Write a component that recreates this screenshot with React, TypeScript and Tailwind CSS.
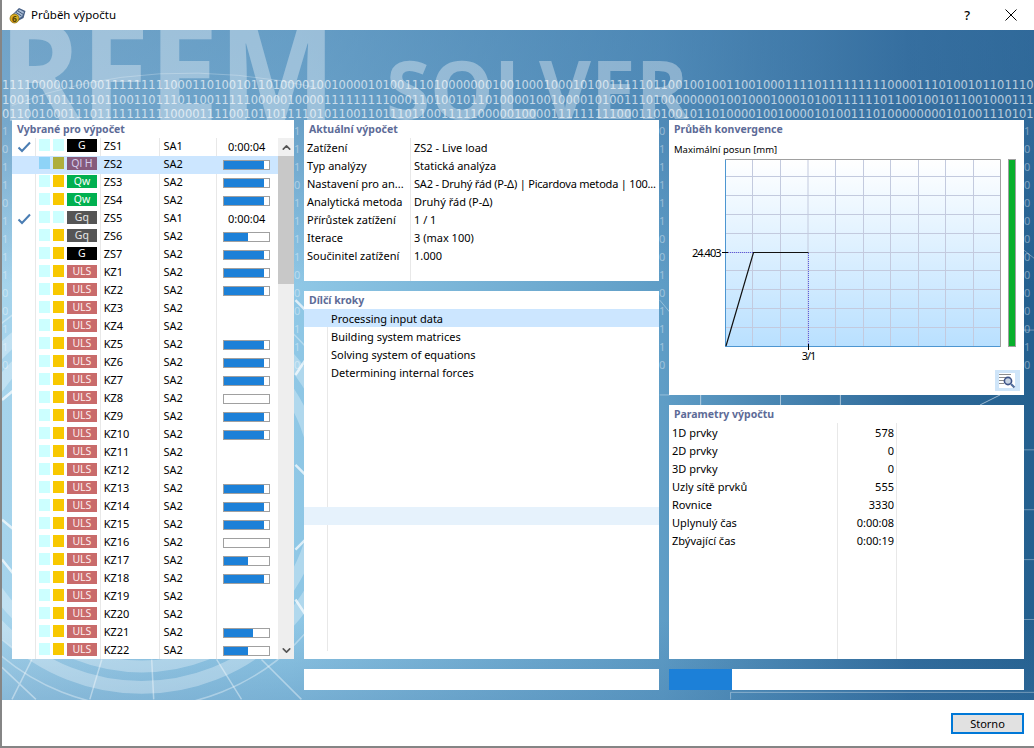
import { ChevronDown, ChevronUp } from "lucide-react";

const BIN = [
  "11110000010000111111111000110100101101000010010000101001110100000001001000100010100111110110010010011001000111101111111110000111010010110111010",
  "10010110111010110011011101100111110000010000111111111000110100101101000010010000101001110100000000100100010001010011111101100100101100100011101",
  "01100100011101111111111000011110010110111101011001101110110011111000001000011111111100011010010110100001001000010100111010000000010100111010110",
];

type Row = {
  id: string;
  sa: string;
  kind: "G" | "Ql" | "Qw" | "Gq" | "ULS";
  done?: boolean;
  yellow?: boolean;
  bar?: number;
  time?: string;
};

const uls = (n: number, bar?: number): Row => ({ id: `KZ${n}`, sa: "SA2", kind: "ULS", yellow: true, bar });

const rows: Row[] = [
  { id: "ZS1", sa: "SA1", kind: "G", done: true, time: "0:00:04" },
  { id: "ZS2", sa: "SA2", kind: "Ql", bar: 88 },
  { id: "ZS3", sa: "SA2", kind: "Qw", yellow: true, bar: 88 },
  { id: "ZS4", sa: "SA2", kind: "Qw", yellow: true, bar: 88 },
  { id: "ZS5", sa: "SA1", kind: "Gq", done: true, time: "0:00:04" },
  { id: "ZS6", sa: "SA2", kind: "Gq", yellow: true, bar: 53 },
  { id: "ZS7", sa: "SA2", kind: "G", yellow: true, bar: 88 },
  uls(1, 88), uls(2, 88), uls(3), uls(4), uls(5, 88), uls(6, 88), uls(7, 88), uls(8, 0),
  uls(9, 88), uls(10, 88), uls(11), uls(12), uls(13, 88), uls(14, 88), uls(15, 88), uls(16, 0),
  uls(17, 53), uls(18, 88), uls(19), uls(20), uls(21, 65), uls(22, 53),
];

const chip = {
  G: { cls: "bg-black text-white", label: "G" },
  Ql: { cls: "bg-[#855a7c] text-[#d5cdec]", label: "Ql H" },
  Qw: { cls: "bg-[#00b050] text-white", label: "Qw" },
  Gq: { cls: "bg-[#555555] text-[#e8e8e8]", label: "Gq" },
  ULS: { cls: "bg-[#c96b6b] text-[#fdeeee]", label: "ULS" },
};

const current = [
  ["Zatížení", "ZS2 - Live load"],
  ["Typ analýzy", "Statická analýza"],
  ["Nastavení pro an...", "SA2 - Druhý řád (P-Δ) | Picardova metoda | 100..."],
  ["Analytická metoda", "Druhý řád (P-Δ)"],
  ["Přírůstek zatížení", "1 / 1"],
  ["Iterace", "3 (max 100)"],
  ["Součinitel zatížení", "1.000"],
];

const steps = ["Processing input data", "Building system matrices", "Solving system of equations", "Determining internal forces"];

const params = [
  ["1D prvky", "578"],
  ["2D prvky", "0"],
  ["3D prvky", "0"],
  ["Uzly sítě prvků", "555"],
  ["Rovnice", "3330"],
  ["Uplynulý čas", "0:00:08"],
  ["Zbývající čas", "0:00:19"],
];

const Header = ({ children }: { children: string }) => (
  <div className="h-[18px] shrink-0 pl-[5px] text-[10.5px] leading-[18px] font-bold text-[#5d6b97]">{children}</div>
);

const ListRow = ({ row, selected }: { row: Row; selected: boolean }) => {
  const line = selected ? "border-transparent" : "border-[#e8e8e8]";
  return (
    <div className={`flex h-[18px] shrink-0 ${selected ? "bg-[#cce6ff]" : ""}`}>
      <div className={`flex w-[24px] items-center border-r pl-[5px] ${line}`}>
        {row.done && (
          <svg width="14" height="12" viewBox="0 0 14 12">
            <path d="M1.5 6.5 L5 10 L13 1.5" fill="none" stroke="#4a7db3" strokeWidth="2" />
          </svg>
        )}
      </div>
      <div className={`flex w-[65px] items-start gap-[3px] border-r pt-[1px] pl-[3px] ${line}`}>
        <span className={`h-[12px] w-[11px] ${selected ? "bg-[#8ed3f7]" : "bg-[#ccffff]"}`} />
        <span className={`h-[12px] w-[11px] ${selected ? "bg-[#aeae3c]" : row.yellow ? "bg-[#f8c800]" : "bg-[#ccffff]"}`} />
        <span className={`h-[13px] w-[30px] text-center text-[10.5px] leading-[13px] ${chip[row.kind].cls}`}>{chip[row.kind].label}</span>
      </div>
      <div className={`w-[60px] border-r pl-[3px] leading-[16px] ${line}`}>{row.id}</div>
      <div className={`w-[57px] border-r pl-[3px] leading-[16px] ${line}`}>{row.sa}</div>
      <div className="flex w-[61px] items-center justify-center pr-[2px] leading-[16px]">
        {row.time}
        {row.bar !== undefined && (
          <div className="h-[10px] w-[47px] border border-[#a0a0a0] bg-white">
            <div className="h-full bg-[#1c80d8]" style={{ width: `${row.bar}%` }} />
          </div>
        )}
      </div>
    </div>
  );
};

const Chart = () => {
  const xs = [752.5, 780.5, 808, 835.5, 863.5, 890.5, 918.5, 945.5, 973.5];
  const ys = [176.5, 195.5, 214.5, 233.5, 252.5, 270.5, 289.5, 308.5, 327.5];
  return (
    <svg width="333" height="210" viewBox="669 159 333 210" className="shrink-0">
      <defs>
        <linearGradient id="plot" x1="0" y1="0" x2="0" y2="1">
          <stop offset="0" stopColor="#ffffff" />
          <stop offset="1" stopColor="#b9e0ff" />
        </linearGradient>
      </defs>
      <rect x="725.5" y="159.5" width="275" height="187" fill="url(#plot)" />
      {xs.map((x) => <line key={x} x1={x} x2={x} y1="159" y2="347" stroke="#c3cade" />)}
      {ys.map((y) => <line key={y} x1="725" x2="1001" y1={y} y2={y} stroke="#c3cade" />)}
      <path d="M725.5 347 V159.5" stroke="#4d96d1" fill="none" />
      <path d="M725 346.5 H1001" stroke="#4d96d1" fill="none" />
      <path d="M725 159.5 H1000.5 V347" stroke="#a0a0a0" fill="none" />
      <path d="M726 252.5 H753 M808.5 253 V346" stroke="#5a5ae0" strokeDasharray="1 1" fill="none" />
      <path d="M726 346 L753.5 252.5 H808.5" stroke="#111111" strokeWidth="1.2" fill="none" />
      <path d="M722 252.5 H728 M808.5 344 V350" stroke="#000000" fill="none" />
      <text x="720.5" y="256.5" textAnchor="end" fontSize="11" letterSpacing="-1" fill="#000000">24.403</text>
      <text x="808.5" y="360" textAnchor="middle" fontSize="11" letterSpacing="-1" fill="#000000">3/1</text>
    </svg>
  );
};

const Backdrop = () => (
  <svg className="absolute inset-0 h-full w-full" width="1034" height="670" viewBox="0 30 1034 670">
    <g fill="none" stroke="#ffffff">
      <circle cx="140" cy="490" r="177" strokeWidth="12" opacity="0.3" />
      <circle cx="140" cy="490" r="198" strokeWidth="13" opacity="0.3" />
      <circle cx="140" cy="490" r="218" strokeWidth="1.5" opacity="0.35" />
      <path d="M0 668 L34 700 M30 660 L10 700 M100 660 L88 700 M150 660 L152 700 M215 660 L240 700 M260 660 L300 700 M0 640 L12 650" strokeWidth="1.5" opacity="0.4" />
      <path d="M294 375 L304 360 M294 465 L304 475 M294 550 L304 540 M294 600 L304 615 M294 300 L304 310 M0 400 L12 390 M0 520 L12 530 M0 560 L12 575" strokeWidth="2.5" opacity="0.7" />
      <path d="M659 395 H669 M659 300 L669 312 M1024 450 H1034 M1024 510 H1034 M1024 560 H1034 M1024 620 H1034 M1024 250 L1034 258 M1024 330 H1034 M730 700 V693 H1034" strokeWidth="1" opacity="0.35" />
      <path d="M700 395 V405 M840 395 V405 M980 405 L1000 395 M780 395 V405" strokeWidth="1" opacity="0.55" />
      <path d="M10 105 Q150 50 320 88" strokeWidth="1" opacity="0.25" />
    </g>
  </svg>
);

// digits that show in the gaps between the panels
const DigitStrip = ({ cls, offset }: { cls: string; offset: number }) => (
  <div className={`absolute top-[92px] w-[10px] overflow-hidden text-white/40 ${cls}`}>
    {Array.from({ length: 14 }, (_, i) => (
      <div key={i}>{BIN[i % 3][offset + i * 7]}</div>
    ))}
  </div>
);

export default function App() {
  return (
    <div className="flex h-[748px] w-[1034px] flex-col overflow-hidden border-b-2 border-l-2 border-[#858585] bg-white font-['Noto_Sans',sans-serif] text-[11px] leading-[18px] text-black">
      {/* Title bar */}
      <div className="flex h-[30px] shrink-0 items-center pl-[7px]">
        <svg width="17" height="17" viewBox="0 0 17 17">
          <path d="M3 8 L10 1 L16.5 4 L14.5 11 L7 15 Z" fill="#465f85" />
          <path d="M5 7 L10.5 2.5 L15 5 L13 9.5 L8 12.5 Z" fill="#a9bdd6" />
          <path d="M7 5.5 L12.5 9 M9 4 L14.5 7.5" stroke="#3f5679" />
          <circle cx="5.5" cy="11.5" r="4.5" fill="#dcae22" stroke="#7e6410" strokeWidth="0.7" />
          <text x="5.5" y="14.5" textAnchor="middle" fontSize="8.5" fontWeight="700" fill="#4e3d07">6</text>
        </svg>
        <span className="ml-[5px] text-[11.5px]">Průběh výpočtu</span>
        <span className="ml-auto text-[13px] font-medium">?</span>
        <svg width="12" height="12" viewBox="0 0 12 12" className="mr-[17px] ml-[35px]">
          <path d="M0.5 0.5 L11.5 11.5 M11.5 0.5 L0.5 11.5" stroke="#000000" />
        </svg>
      </div>

      {/* Main area */}
      <div className="relative flex h-[670px] shrink-0 gap-[10px] overflow-hidden bg-[linear-gradient(180deg,rgba(60,115,165,0.5)_0%,rgba(60,115,165,0.45)_14%,rgba(60,115,165,0)_38%,rgba(60,115,165,0)_88%,rgba(60,115,165,0.28)_100%),linear-gradient(90deg,#a6d4ec_0%,#90c8e6_28%,#5f9dc6_64%,#2f6a9a_88%,#24608f_100%)] pt-[90px] pb-[10px] pl-[10px]">
        <Backdrop />
        <div className="absolute top-[-57px] left-[-3px] origin-left scale-x-[0.9] font-['Open_Sans',sans-serif] text-[138px] leading-[188px] font-bold text-white/35">RFEM</div>
        <div className="absolute top-[4px] left-[384px] font-['Open_Sans',sans-serif] text-[80px] leading-[108px] font-bold text-white/35">SOLVER</div>
        <div className="absolute top-[48px] left-0 w-full overflow-hidden font-['DejaVu_Sans',sans-serif] text-[11.5px] leading-[14.5px] whitespace-nowrap text-white/65">
          {BIN.map((b) => <div key={b}>{b}</div>)}
        </div>
        <DigitStrip cls="left-0" offset={0} />
        <DigitStrip cls="left-[292px]" offset={3} />
        <DigitStrip cls="left-[657px]" offset={5} />
        <DigitStrip cls="left-[1022px]" offset={9} />

        {/* Left list */}
        <div className="relative flex h-[539px] w-[282px] shrink-0 flex-col overflow-hidden bg-white">
          <Header>Vybrané pro výpočet</Header>
          <div className="flex min-h-0 flex-1">
            <div className="flex w-[266px] flex-col overflow-hidden">
              {rows.map((r) => <ListRow key={r.id} row={r} selected={r.id === "ZS2"} />)}
            </div>
            <div className="flex w-[16px] flex-col bg-[#eeeeee]">
              <div className="flex h-[18px] items-center justify-center bg-[#f0f0f0] text-[#555555]">
                <ChevronUp size={13} strokeWidth={3} />
              </div>
              <div className="h-[128px] bg-[#c8c8c8]" />
              <div className="mt-auto flex h-[18px] items-center justify-center text-[#555555]">
                <ChevronDown size={13} strokeWidth={3} />
              </div>
            </div>
          </div>
        </div>

        {/* Middle column */}
        <div className="relative flex w-[355px] shrink-0 flex-col gap-[10px]">
          <div className="flex h-[161px] shrink-0 flex-col bg-white">
            <Header>Aktuální výpočet</Header>
            <div className="flex flex-1">
              <div className="w-[107px] shrink-0 border-r border-[#e8e8e8] pt-[1px] pl-[3px]">
                {current.map((c) => <div key={c[0]} className="h-[18px] whitespace-nowrap">{c[0]}</div>)}
              </div>
              <div className="min-w-0 flex-1 pt-[1px] pl-[3px]">
                {current.map((c, i) => (
                  <div key={c[0]} className={`h-[18px] whitespace-nowrap ${i === 2 ? "tracking-[-0.2px]" : ""}`}>{c[1]}</div>
                ))}
              </div>
            </div>
          </div>

          <div className="flex h-[368px] shrink-0 flex-col overflow-hidden bg-white">
            <Header>Dílčí kroky</Header>
            {Array.from({ length: 19 }, (_, i) => (
              <div key={i} className={`flex h-[18px] shrink-0 leading-[20px] ${i === 0 ? "bg-[#cce6ff]" : i === 11 ? "bg-[#e6f2fc]" : ""}`}>
                <div className={`w-[24px] border-r ${i === 0 || i === 11 ? "border-transparent" : "border-[#e8e8e8]"}`} />
                <div className="pl-[3px]">{steps[i]}</div>
              </div>
            ))}
          </div>

          <div className="h-[21px] shrink-0 bg-white" />
        </div>

        {/* Right column */}
        <div className="relative flex w-[355px] shrink-0 flex-col gap-[10px]">
          <div className="flex h-[275px] shrink-0 flex-col bg-white">
            <Header>Průběh konvergence</Header>
            <div className="mt-[3px] h-[18px] pl-[5px] text-[9.5px] leading-[18px]">Maximální posun [mm]</div>
            <div className="flex gap-[6px]">
              <Chart />
              <div className="h-[188px] w-[8px] border border-[#a0a0a0] bg-[#08b02c]" />
            </div>
            <div className="mt-[1px] flex justify-end pr-[4px]">
              <div className="flex h-[21px] w-[25px] items-center justify-center bg-[#cfe5f9]">
                <svg width="17" height="16" viewBox="0 0 17 16">
                  <rect width="16" height="15" fill="#ffffff" />
                  <path d="M0 1.5 H12 M0 4.5 H9 M0 7.5 H5 M0 10.5 H5" stroke="#8c8c8c" />
                  <circle cx="9" cy="8" r="3.6" fill="#c7d3e2" stroke="#3f5488" strokeWidth="1.6" />
                  <path d="M12 11 L15.5 14.5" stroke="#54709f" strokeWidth="2.2" />
                </svg>
              </div>
            </div>
          </div>

          <div className="flex h-[254px] shrink-0 flex-col bg-white">
            <Header>Parametry výpočtu</Header>
            <div className="flex flex-1">
              <div className="w-[169px] border-r border-[#e8e8e8] pt-[1px] pl-[3px]">
                {params.map((p) => <div key={p[0]} className="h-[18px]">{p[0]}</div>)}
              </div>
              <div className="w-[59px] border-r border-[#e8e8e8] pt-[1px] pr-[2px] text-right">
                {params.map((p) => <div key={p[0]} className="h-[18px]">{p[1]}</div>)}
              </div>
            </div>
          </div>

          <div className="h-[21px] shrink-0 bg-white">
            <div className="h-full w-[63px] bg-[#1c80d8]" />
          </div>
        </div>
      </div>

      {/* Footer */}
      <div className="flex flex-1 items-start justify-end pt-[13px] pr-[10px]">
        <button className="h-[21px] w-[73px] border-2 border-[#0078d7] bg-[#e1e1e1] text-[11px] leading-[16px]">Storno</button>
      </div>
    </div>
  );
}
